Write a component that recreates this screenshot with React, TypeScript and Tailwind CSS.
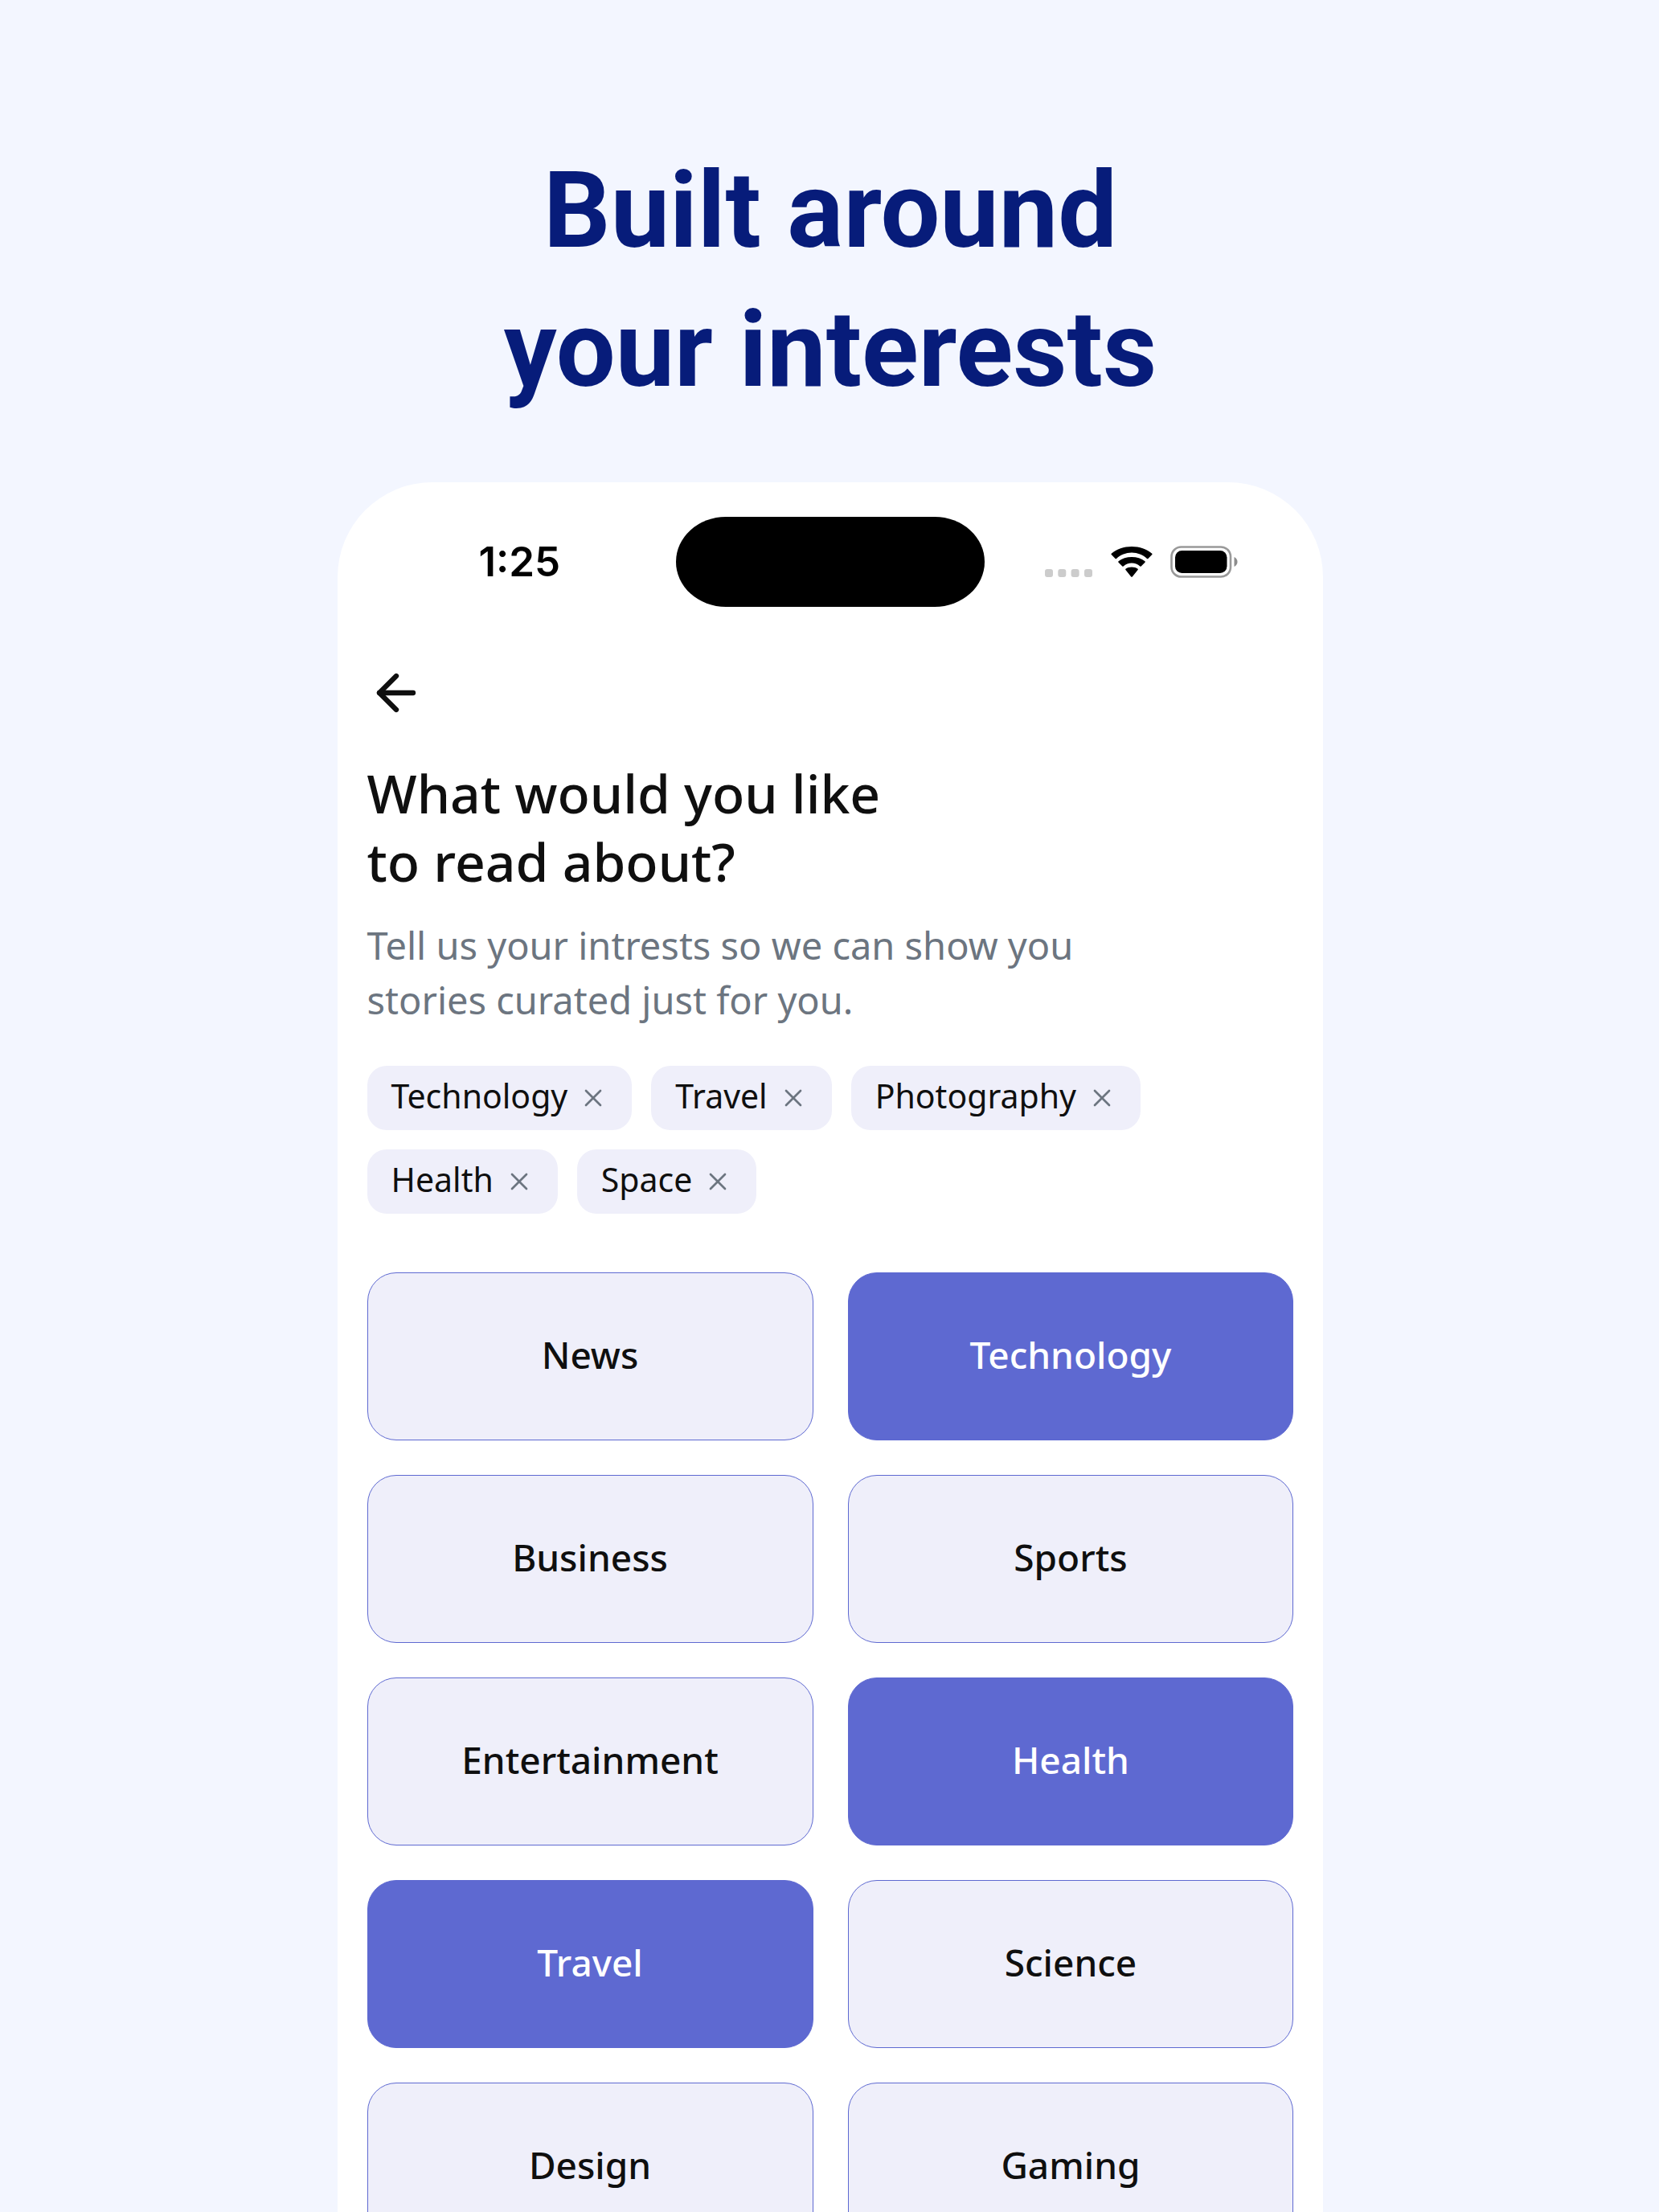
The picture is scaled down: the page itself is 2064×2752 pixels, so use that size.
import { useState } from 'react';
import { ArrowLeft, X } from 'lucide-react';

const interests = ['News', 'Technology', 'Business', 'Sports', 'Entertainment', 'Health', 'Travel', 'Science', 'Design', 'Gaming'];

function StatusBar() {
  return (
    <div className="grid h-28 grid-cols-[1fr_384px_1fr] items-center text-black">
      <span className="pl-8 text-center font-['Inter',sans-serif] text-[51px] font-semibold">1:25</span>
      <div className="h-full rounded-[62px/56px] bg-black" />
      <div className="flex items-center justify-center gap-[22px] pr-8">
        <svg className="h-10 w-[60px]" viewBox="0 0 60 40" fill="#cccccc" aria-hidden>
          <rect x="0" y="29" width="10" height="10" rx="3" />
          <rect x="16.3" y="29" width="10" height="10" rx="3" />
          <rect x="32.6" y="29" width="10" height="10" rx="3" />
          <rect x="49" y="29" width="10" height="10" rx="3" />
        </svg>
        <svg className="h-10 w-[52px]" viewBox="0 0 52 40" fill="currentColor" aria-hidden>
          <path d="M26 8.6c7.3 0 14 2.8 19 7.4.4.4 1 .4 1.4 0l4.9-4.9c.4-.4.4-1 0-1.4C44.7 4 35.8 1 26 1S7.3 4 .7 9.7c-.4.4-.4 1 0 1.4L5.600 16c.4.4 1 .4 1.400 0 5-4.600 11.700-7.400 19-7.400z" />
          <path d="M26 21.6c3.9 0 7.5 1.4 10.3 3.9.4.4 1 .4 1.4 0l4.8-4.800c.4-.4.4-1 0-1.400C38.100 15.600 32.300 14 26 14s-12.100 1.600-16.500 5.300c-.4.4-.4 1 0 1.400l4.800 4.800c.4.4 1 .4 1.400 0 2.800-2.500 6.400-3.900 10.300-3.900z" />
          <path d="M33.6 30.1c.4-.4.4-1 0-1.4-2-1.5-4.7-2.2-7.600-2.200s-5.600.7-7.600 2.200c-.4.4-.4 1 0 1.400l6.800 8.300c.4.5 1.200.5 1.600 0z" />
        </svg>
        <svg className="h-10 w-[84px]" viewBox="0 0 84 40" aria-hidden>
          <rect x="1.5" y="1.5" width="73.5" height="37" rx="12" fill="none" stroke="#999999" strokeWidth="2.6" />
          <rect x="6" y="6" width="64.5" height="28" rx="8.5" fill="#000000" />
          <path d="M79.5 14c2.5 1 4 3.400 4 6s-1.500 5-4 6z" fill="#8c8c8c" />
        </svg>
      </div>
    </div>
  );
}

function Chip({ label, onRemove }: { label: string; onRemove: () => void }) {
  return (
    <button
      type="button"
      onClick={onRemove}
      aria-label={`Remove ${label}`}
      className="flex h-20 items-center gap-3.5 rounded-3xl bg-[#efeffa] px-[30px] text-[41px]"
    >
      <span className="pb-1">{label}</span>
      <X className="size-9 text-[#6c7580]" strokeWidth={1.8} />
    </button>
  );
}

function InterestCard({ label, active, onToggle }: { label: string; active: boolean; onToggle: () => void }) {
  return (
    <button
      type="button"
      onClick={onToggle}
      aria-pressed={active}
      className={`h-[209px] rounded-[36px] border border-[#5e69d1] pb-1 text-[46px] font-medium ${
        active ? 'bg-[#5e69d1] text-white' : 'bg-[#efeffa]'
      }`}
    >
      {label}
    </button>
  );
}

export default function App() {
  const [selected, setSelected] = useState(['Technology', 'Travel', 'Photography', 'Health', 'Space']);

  function toggle(name: string) {
    setSelected((prev) => (prev.includes(name) ? prev.filter((n) => n !== name) : [...prev, name]));
  }

  return (
    <main className="flex h-screen flex-col items-center overflow-hidden bg-[#f3f6ff] pt-44 pl-0.5">
      <h1 className="text-center font-['Roboto',sans-serif] text-[131px] leading-[173px] font-bold text-[#071c7a]">
        Built around
        <br />
        your interests
      </h1>

      <section className="mt-[78px] w-[59.5%] shrink-0 rounded-t-[118px] bg-white pt-[43px] font-['Noto_Sans',sans-serif] text-[#0f0f0f]">
        <StatusBar />

        <div className="px-[37px] pt-[71px]">
          <button type="button" aria-label="Back" className="block">
            <ArrowLeft className="size-[72px]" strokeWidth={2.1} />
          </button>

          <h2 className="mt-[46px] text-[66px] leading-[85px] font-medium">
            What would you like
            <br />
            to read about?
          </h2>
          <p className="mt-7 text-[47px] leading-[68px] text-[#6c7580]">
            Tell us your intrests so we can show you
            <br />
            stories curated just for you.
          </p>

          <div className="mt-12 flex flex-wrap gap-6 pr-36">
            {selected.map((name) => (
              <Chip key={name} label={name} onRemove={() => toggle(name)} />
            ))}
          </div>

          <div className="mt-[73px] grid grid-cols-2 gap-[43px]">
            {interests.map((name) => (
              <InterestCard key={name} label={name} active={selected.includes(name)} onToggle={() => toggle(name)} />
            ))}
          </div>
        </div>
      </section>
    </main>
  );
}
